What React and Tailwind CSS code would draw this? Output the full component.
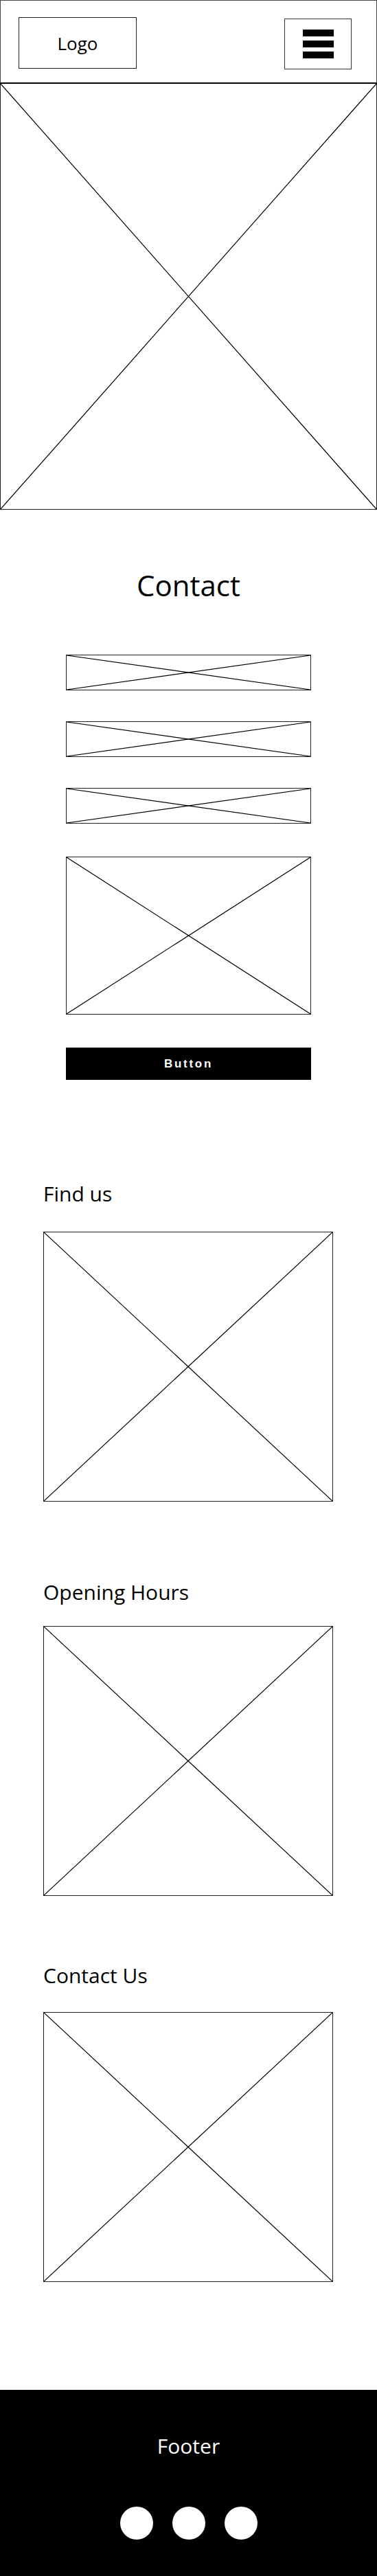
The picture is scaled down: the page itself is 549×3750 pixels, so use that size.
import React from 'react'

const Placeholder = ({ className = '' }) => (
  <div className={`border border-[#222] bg-white ${className}`}>
    <svg className="block w-full h-full" viewBox="0 0 100 100" preserveAspectRatio="none">
      <line x1="0" y1="0" x2="100" y2="100" stroke="#000" strokeWidth="1.2" vectorEffect="non-scaling-stroke" />
      <line x1="100" y1="0" x2="0" y2="100" stroke="#000" strokeWidth="1.2" vectorEffect="non-scaling-stroke" />
    </svg>
  </div>
)

const Header = () => (
  <header className="h-[122px] border-x border-t border-[#444] border-b-2 border-b-black flex items-start justify-between pl-[26px] pr-[36px]">
    <div className="mt-[24px] w-[172px] h-[75px] border border-[#222] flex items-center justify-center">
      <span className="text-[26px] text-black leading-none">Logo</span>
    </div>
    <button className="mt-[26px] w-[98px] h-[74px] border border-[#333] flex flex-col items-center justify-center gap-[6px]">
      <span className="block w-[45px] h-[10px] bg-black" />
      <span className="block w-[45px] h-[10px] bg-black" />
      <span className="block w-[45px] h-[10px] bg-black" />
    </button>
  </header>
)

export default function App() {
  return (
    <div className="w-[549px] min-h-[3750px] bg-white font-['Open_Sans',sans-serif] text-black flex flex-col">
      <Header />
      <Placeholder className="w-full h-[620px] border-t-0" />

      <main className="flex flex-col">
        <h1 className="mt-[89px] text-center text-[42px] leading-none">Contact</h1>

        <form className="mt-[80px] mx-auto w-[357px] flex flex-col">
          <Placeholder className="h-[52px]" />
          <Placeholder className="mt-[45px] h-[52px]" />
          <Placeholder className="mt-[45px] h-[52px]" />
          <Placeholder className="mt-[48px] h-[230px]" />
          <button
            type="button"
            className="mt-[48px] h-[47px] bg-black text-white font-['Liberation_Sans',sans-serif] font-bold text-[17px] tracking-[0.16em]"
          >
            Button
          </button>
        </form>

        <section className="mt-[151px] pl-[63px]">
          <h2 className="text-[30px] leading-none">Find us</h2>
          <Placeholder className="mt-[40px] w-[422px] h-[393px]" />
        </section>

        <section className="mt-[117px] pl-[63px]">
          <h2 className="text-[30px] leading-none">Opening Hours</h2>
          <Placeholder className="mt-[34px] w-[422px] h-[393px]" />
        </section>

        <section className="mt-[101px] pl-[63px]">
          <h2 className="text-[30px] leading-none">Contact Us</h2>
          <Placeholder className="mt-[38px] w-[422px] h-[393px]" />
        </section>
      </main>

      <footer className="mt-[157px] h-[271px] bg-black flex flex-col items-center pt-[67px]">
        <p className="text-white text-[30px] leading-none">Footer</p>
        <div className="mt-[73px] flex gap-[28px]">
          <span className="block w-[48px] h-[48px] rounded-full bg-white" />
          <span className="block w-[48px] h-[48px] rounded-full bg-white" />
          <span className="block w-[48px] h-[48px] rounded-full bg-white" />
        </div>
      </footer>
    </div>
  )
}
